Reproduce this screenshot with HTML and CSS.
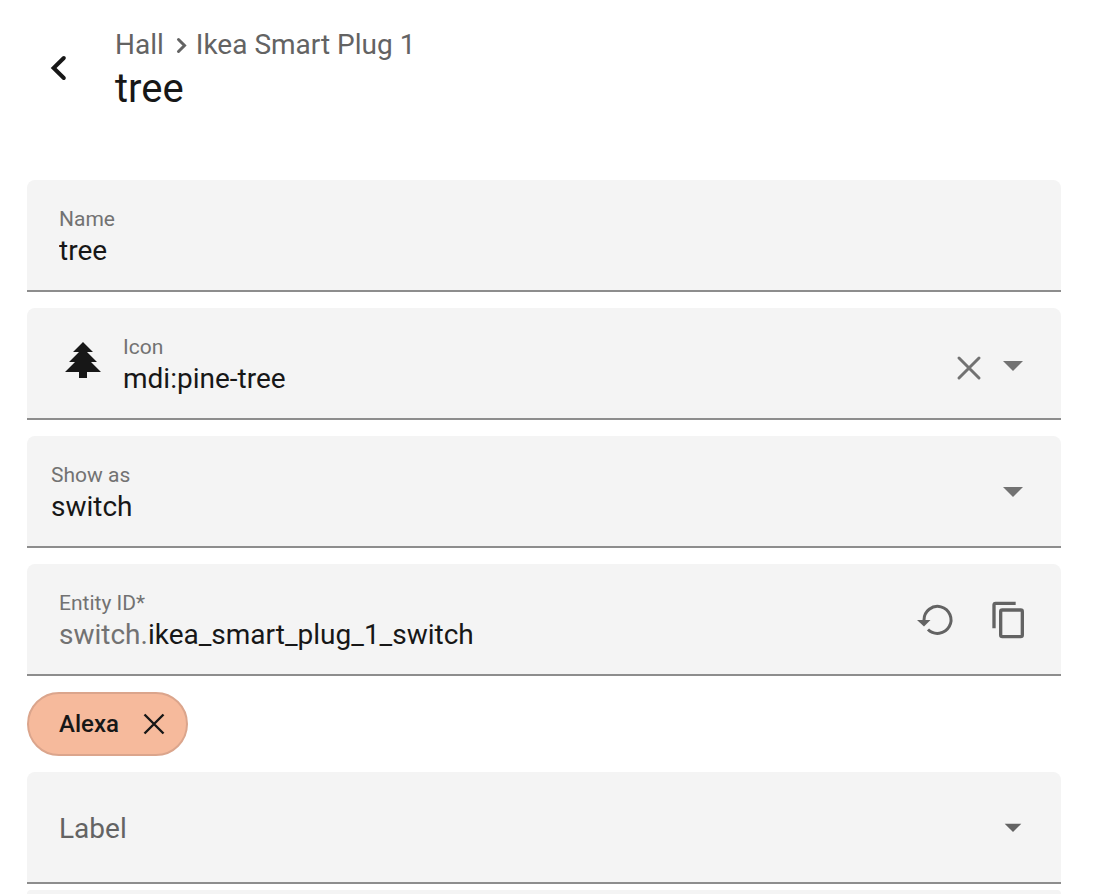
FILE: index.html
```html
<!DOCTYPE html>
<html lang="en">
<head>
    <meta charset="UTF-8">
    <meta name="viewport" content="width=device-width, initial-scale=1">
    <title>tree</title>
    <link rel="stylesheet" href="styles.css">
</head>
<body>
    <header class="header">
        <button class="icon-btn back" type="button" aria-label="Back">
            <svg width="48" height="48" viewBox="0 0 24 24"><path class="line thick" d="M14.4 7 9.300 12l5.100 5"/></svg>
        </button>
        <div class="heading">
            <nav class="breadcrumb">
                <a href="#">Hall</a>
                <svg width="32" height="32" viewBox="0 0 32 32"><path class="line" d="m14.500 10.500 6 6-6 6"/></svg>
                <a href="#">Ikea Smart Plug 1</a>
            </nav>
            <h1>tree</h1>
        </div>
    </header>

    <form class="settings">
        <div class="field">
            <div class="text">
                <label for="name">Name</label>
                <input type="text" id="name" value="tree">
            </div>
        </div>

        <div class="field">
            <svg class="leading" width="48" height="48" viewBox="0 0 24 24"><path d="M10 21v-3H3l5-5H5l5-5H7l5-5 5 5h-3l5 5h-3l5 5h-7v3z"/></svg>
            <div class="text">
                <label for="icon">Icon</label>
                <input type="text" id="icon" value="mdi:pine-tree">
            </div>
            <div class="actions low">
                <button class="icon-btn clear" type="button" aria-label="Clear">
                    <svg width="40" height="40" viewBox="0 0 40 40"><path class="line" d="m10 11 20 20M30 11 10 31"/></svg>
                </button>
                <button class="icon-btn" type="button" aria-label="Open">
                    <svg width="48" height="48" viewBox="0 0 24 24"><path d="m7 9 5 5 5-5z"/></svg>
                </button>
            </div>
        </div>

        <div class="field select">
            <div class="text">
                <label for="show-as">Show as</label>
                <select id="show-as">
                    <option>switch</option>
                    <option>outlet</option>
                </select>
            </div>
            <svg class="arrow" width="48" height="48" viewBox="0 0 24 24"><path d="m7 10 5 5 5-5z"/></svg>
        </div>

        <div class="field">
            <div class="text">
                <label for="entity-id">Entity ID*</label>
                <div class="prefixed">
                    <span>switch.</span>
                    <input type="text" id="entity-id" value="ikea_smart_plug_1_switch" required>
                </div>
            </div>
            <div class="actions wide">
                <button class="icon-btn" type="button" aria-label="Restore">
                    <svg width="40" height="40" viewBox="0 0 40 40">
                        <path class="line flat" d="M7 20A13.500 13.500 0 1 1 11 29.500"/>
                        <path d="M0 20h13.500L7 26.500z"/>
                    </svg>
                </button>
                <button class="icon-btn" type="button" aria-label="Copy">
                    <svg width="40" height="40" viewBox="0 0 24 24"><path d="M19 21H8V7h11m0-2H8a2 2 0 0 0-2 2v14a2 2 0 0 0 2 2h11a2 2 0 0 0 2-2V7a2 2 0 0 0-2-2m-3-4H4a2 2 0 0 0-2 2v14h2V3h12z"/></svg>
                </button>
            </div>
        </div>

        <div class="chip">
            <span>Alexa</span>
            <button class="icon-btn" type="button" aria-label="Remove Alexa">
                <svg width="28" height="28" viewBox="0 0 28 28"><path class="line flat thin" d="m4.500 4.500 19 19M23.500 4.500l-19 19"/></svg>
            </button>
        </div>

        <div class="field">
            <div class="text single">
                <input type="text" id="labels" placeholder="Label" aria-label="Label">
            </div>
            <div class="actions">
                <button class="icon-btn dark" type="button" aria-label="Open">
                    <svg width="40" height="40" viewBox="0 0 24 24"><path d="m7 10 5 5 5-5z"/></svg>
                </button>
            </div>
        </div>

        <div class="field next"></div>
    </form>
</body>
</html>
```

FILE: styles.css
```css
:root {
    --text-color: #171717;
    --secondary-color: #636363;
    --label-color: #727272;
    --field-color: #f4f4f4;
    --line-color: #8d8d8d;
}

* {
    box-sizing: border-box;
}

body {
    display: flex;
    flex-direction: column;
    min-height: 100vh;
    margin: 0;
    background: #fff;
    color: var(--text-color);
    font-family: Roboto, "Liberation Sans", sans-serif;
    font-size: 28px;
    line-height: 32px;
}

svg {
    display: block;
    flex: none;
    fill: currentColor;
}

.line {
    fill: none;
    stroke: currentColor;
    stroke-width: 3;
    stroke-linecap: round;
}

.thick {
    stroke-width: 2;
}

.flat {
    stroke-linecap: butt;
}

.thin {
    stroke-width: 2.4;
}

.icon-btn {
    display: flex;
    align-items: center;
    justify-content: center;
    flex: none;
    padding: 0;
    border: none;
    background: none;
    color: inherit;
    cursor: pointer;
}

.header {
    display: flex;
    align-items: flex-start;
    gap: 8px;
    padding: 20px 11px 64px;
}

.back {
    width: 96px;
    height: 96px;
}

.heading {
    padding-top: 9px;
}

.breadcrumb {
    display: flex;
    align-items: center;
    color: var(--secondary-color);
}

.breadcrumb a {
    color: inherit;
    text-decoration: none;
}

h1 {
    margin: 4px 0 0;
    font-size: 40px;
    font-weight: 400;
    line-height: 48px;
}

.settings {
    display: flex;
    flex: 1;
    flex-direction: column;
    gap: 16px;
    padding: 0 37px 0 27px;
}

.field {
    display: flex;
    flex: none;
    height: 112px;
    padding: 0 24px 0 32px;
    border-bottom: 2px solid var(--line-color);
    border-radius: 8px 8px 0 0;
    background: var(--field-color);
}

.field.select {
    padding-left: 24px;
}

.field.next {
    flex: 1;
    height: auto;
    margin-top: -10px;
    border: none;
}

.leading {
    margin: 28px 16px 0 0;
}

.text {
    display: flex;
    flex: 1;
    flex-direction: column;
    gap: 4px;
    min-width: 0;
    padding-top: 27px;
}

.text.single {
    justify-content: center;
    padding-top: 4px;
}

label {
    color: var(--label-color);
    font-size: 21px;
    line-height: 24px;
}

input,
select {
    width: 100%;
    height: 32px;
    padding: 0;
    border: none;
    outline: none;
    appearance: none;
    background: none;
    color: inherit;
    font: inherit;
}

input::placeholder {
    color: var(--secondary-color);
    opacity: 1;
}

.prefixed {
    display: flex;
}

.prefixed span {
    color: var(--label-color);
}

.prefixed input {
    flex: 1;
    min-width: 0;
}

.actions {
    display: flex;
    align-items: center;
    color: var(--label-color);
}

.actions .icon-btn {
    width: 48px;
}

.actions .clear {
    width: 40px;
}

.actions.low {
    padding-top: 8px;
}

.actions.wide {
    gap: 24px;
    padding: 2px 4px 0 0;
}

.actions.wide,
.actions .dark {
    color: var(--secondary-color);
}

.arrow {
    align-self: center;
    color: var(--label-color);
    pointer-events: none;
}

.chip {
    display: flex;
    align-items: center;
    align-self: flex-start;
    gap: 21px;
    height: 64px;
    padding: 0 18px 0 30px;
    border: 2px solid #dba58c;
    border-radius: 32px;
    background: #f6ba9c;
    font-size: 24px;
    font-weight: 500;
}
```
